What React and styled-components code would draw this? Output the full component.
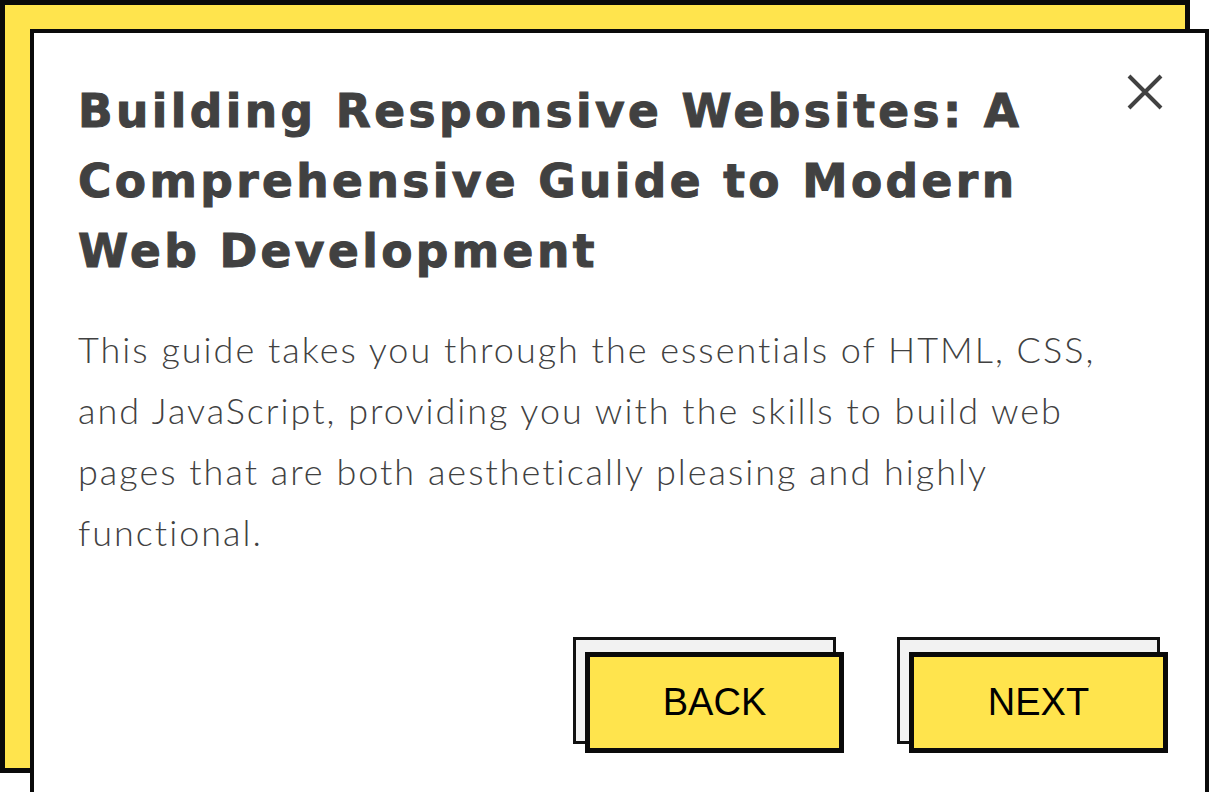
import React from 'react';
import styled, { createGlobalStyle } from 'styled-components';

const GlobalStyle = createGlobalStyle`
    html, body {
        margin: 0;
        padding: 0;
        background: #ffffff;
        overflow: hidden;
    }
`;

const Stage = styled.div`
    position: relative;
    width: 1209px;
    height: 792px;
    padding: 29px 0 0 30px;
    box-sizing: border-box;

    &::before {
        content: '';
        position: absolute;
        top: 0;
        left: 0;
        width: 1190px;
        height: 773px;
        box-sizing: border-box;
        background: #ffe44d;
        border: 5px solid #0a0a0a;
    }
`;

const Card = styled.div`
    position: relative;
    width: 1179px;
    height: 770px;
    box-sizing: border-box;
    background: #ffffff;
    border: 4px solid #0a0a0a;
    padding: 44px 37px 0 44px;
    display: flex;
    flex-direction: column;
`;

const Header = styled.div`
    display: flex;
    justify-content: space-between;
    align-items: flex-start;
`;

const Title = styled.h1`
    margin: 0;
    font-family: "DejaVu Sans", Inter, sans-serif;
    font-weight: 700;
    font-size: 45.5px;
    letter-spacing: 3.4px;
    line-height: 70px;
    color: #414141;
    -webkit-text-stroke: 1px #414141;
    white-space: nowrap;
`;

const CloseButton = styled.button`
    background: none;
    border: 0;
    padding: 0;
    margin: -3px 5px 0 0;
    width: 36px;
    height: 36px;
    cursor: pointer;
    display: flex;

    svg {
        width: 36px;
        height: 36px;
    }
`;

const Body = styled.p`
    margin: 32px 0 0;
    font-family: Lato, "Open Sans", sans-serif;
    font-weight: 300;
    font-size: 36px;
    letter-spacing: 2px;
    line-height: 61px;
    color: #414141;
    white-space: nowrap;
`;

const Actions = styled.div`
    margin-top: auto;
    margin-bottom: 42px;
    display: flex;
    justify-content: flex-end;
    gap: 51px;
`;

const ButtonWrap = styled.div`
    position: relative;
    padding: 15px 0 0 14px;

    &::before {
        content: '';
        position: absolute;
        top: 0;
        left: 2px;
        width: 263px;
        height: 107px;
        box-sizing: border-box;
        background: #f2f2f2;
        border: 3px solid #111111;
    }
`;

const Button = styled.button`
    position: relative;
    width: 259px;
    height: 101px;
    box-sizing: border-box;
    background: #ffe44d;
    border: 5px solid #0a0a0a;
    font-family: "Liberation Sans", Arial, sans-serif;
    font-size: 38px;
    color: #000000;
    cursor: pointer;
    padding: 0;
`;

const CloseIcon = () => (
    <svg viewBox="0 0 36 36" fill="none">
        <path d="M2 2 L34 34 M34 2 L2 34" stroke="#414141" strokeWidth="4" />
    </svg>
);

const App = () => (
    <>
        <GlobalStyle />
        <Stage>
            <Card>
                <Header>
                    <Title>
                        Building Responsive Websites: A<br />
                        Comprehensive Guide to Modern<br />
                        Web Development
                    </Title>
                    <CloseButton aria-label="Close">
                        <CloseIcon />
                    </CloseButton>
                </Header>

                <Body>
                    This guide takes you through the essentials of HTML, CSS,<br />
                    and JavaScript, providing you with the skills to build web<br />
                    pages that are both aesthetically pleasing and highly<br />
                    functional.
                </Body>

                <Actions>
                    <ButtonWrap>
                        <Button>BACK</Button>
                    </ButtonWrap>
                    <ButtonWrap>
                        <Button>NEXT</Button>
                    </ButtonWrap>
                </Actions>
            </Card>
        </Stage>
    </>
);

export default App;
